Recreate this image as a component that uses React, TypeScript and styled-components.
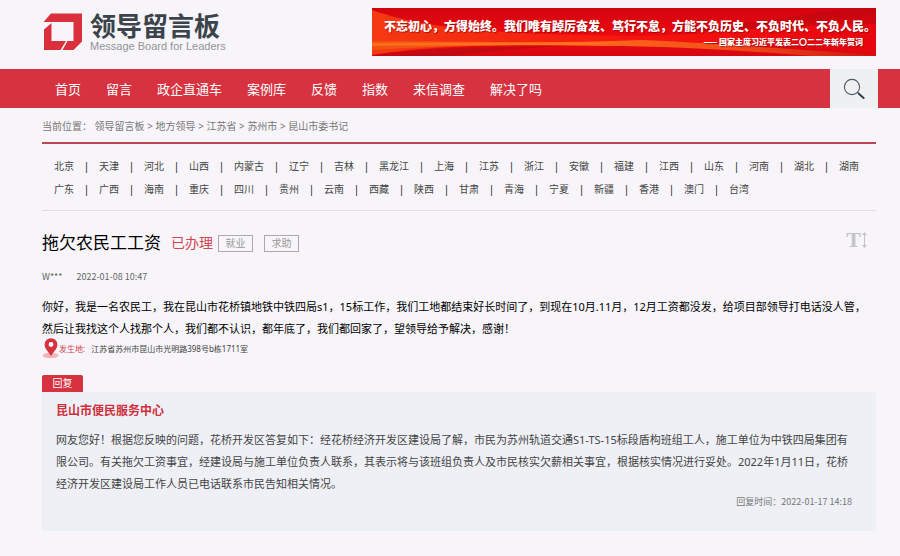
import React from "react";
import styled, { createGlobalStyle } from "styled-components";

const Global = createGlobalStyle`
  * { box-sizing: border-box; }
  body {
    margin: 0;
    background: #f7f5f9;
    color: #444;
    font-family: "Noto Sans", "Noto Sans CJK SC", sans-serif;
    font-size: 10px;
  }
  a { color: inherit; text-decoration: none; }
  h1, h2, p, ul { margin: 0; padding: 0; }
  ul { list-style: none; }
  button { border: 0; padding: 0; background: none; font: inherit; cursor: pointer; }
`;

const Header = styled.header`
  display: flex;
  justify-content: space-between;
  align-items: flex-start;
  padding: 8px 24px 13px 42px;
`;

const Logo = styled.a`
  display: flex;
  gap: 8px;
  padding-top: 5px;
`;

const LogoText = styled.span`
  display: flex;
  flex-direction: column;
`;

const LogoName = styled.strong`
  font-size: 26px;
  line-height: 26px;
  font-weight: 700;
  color: #3b444a;
  white-space: nowrap;
`;

const LogoSub = styled.span`
  font-family: "Liberation Sans", sans-serif;
  font-size: 11px;
  line-height: 14px;
  color: #929497;
  white-space: nowrap;
`;

const Banner = styled.div`
  position: relative;
  width: 504px;
  height: 48px;
  padding: 9px 5px 0 12px;
  overflow: hidden;
  color: #fff;
  font-family: "Noto Sans CJK SC", sans-serif;
  font-weight: 900;
  white-space: nowrap;
  text-shadow: 1px 1px 1px rgba(120, 0, 0, 0.6);
`;

const BannerArt = styled.svg`
  position: absolute;
  inset: 0;
  width: 100%;
  height: 100%;
`;

const Slogan = styled.p`
  position: relative;
  font-size: 12px;
  line-height: 18px;
`;

const Source = styled.p`
  position: relative;
  padding-right: 8px;
  font-size: 8px;
  line-height: 14px;
  text-align: right;
`;

const Nav = styled.nav`
  display: flex;
  align-items: stretch;
  justify-content: space-between;
  height: 39px;
  padding: 0 22px 0 55px;
  background: #d6323f;
  color: #fff;
`;

const NavList = styled.ul`
  display: flex;
  align-items: center;
  gap: 25px;
  font-size: 13px;
  line-height: 20px;
  white-space: nowrap;
`;

const SearchButton = styled.button`
  display: flex;
  align-items: center;
  justify-content: center;
  width: 48px;
  background: #eff0f1;
`;

const Main = styled.main`
  padding: 0 24px 25px 42px;
`;

const Breadcrumb = styled.nav`
  padding: 8px 0 6px;
  border-bottom: 2px solid #bd4552;
  font-size: 10px;
  line-height: 20px;
  color: #777;
`;

const Regions = styled.nav`
  padding: 11px 0 9px 12px;
  border-bottom: 1px solid #dedde1;
`;

const RegionRow = styled.ul`
  display: flex;
  line-height: 23px;
  white-space: nowrap;
`;

const Region = styled.li`
  display: flex;
`;

const Divider = styled.span`
  width: 25px;
  text-align: center;
  color: #222;
`;

const TitleRow = styled.div`
  display: flex;
  align-items: center;
  height: 24px;
  margin-top: 20px;
`;

const Title = styled.h1`
  font-size: 17px;
  line-height: 24px;
  font-weight: 400;
  color: #000;
`;

const Status = styled.span`
  margin: 0 5px 0 10px;
  font-size: 14px;
  line-height: 20px;
  color: #d04552;
`;

const Tag = styled.span`
  width: 35px;
  margin-right: 11px;
  border: 1px solid #aaa;
  font-size: 10px;
  line-height: 15px;
  text-align: center;
  color: #999;
`;

const SizeButton = styled.button`
  display: flex;
  align-items: center;
  gap: 1px;
  margin: 0 9px 6px auto;
  font-family: "Liberation Serif", serif;
  font-size: 22px;
  line-height: 20px;
  font-weight: 700;
  color: #c3c3c6;
`;

const Meta = styled.p`
  display: flex;
  gap: 14px;
  margin-top: 13px;
  font-family: "Noto Sans CJK SC", sans-serif;
  font-size: 9px;
  line-height: 18px;
  color: #666;
`;

const Message = styled.p`
  margin-top: 10px;
  font-size: 11px;
  line-height: 22px;
  color: #000;
`;

const Place = styled.p`
  display: flex;
  align-items: center;
  height: 16px;
  font-size: 8px;
  color: #444;
`;

const PlaceLabel = styled.span`
  margin-right: 6px;
  color: #d04552;
`;

const ReplyTab = styled.div`
  width: 41px;
  margin-top: 19px;
  border-radius: 2px 2px 0 0;
  background: #d6323f;
  color: #fff;
  font-size: 10px;
  line-height: 17px;
  text-align: center;
`;

const Reply = styled.section`
  padding: 8px 20px 22px 14px;
  background: #eef0f6;
`;

const ReplyTitle = styled.h2`
  font-size: 12px;
  line-height: 22px;
  font-weight: 700;
  color: #d0303d;
`;

const ReplyText = styled.p`
  margin-top: 7px;
  font-size: 11px;
  line-height: 22px;
  color: #444;
`;

const ReplyTime = styled.p`
  padding-right: 4px;
  font-family: "Noto Sans CJK SC", sans-serif;
  font-size: 9px;
  line-height: 14px;
  text-align: right;
  color: #777;
`;

const navItems = ["首页", "留言", "政企直通车", "案例库", "反馈", "指数", "来信调查", "解决了吗"];
const crumbs = ["领导留言板", "地方领导", "江苏省", "苏州市", "昆山市委书记"];
const regions = [
  ["北京", "天津", "河北", "山西", "内蒙古", "辽宁", "吉林", "黑龙江", "上海", "江苏", "浙江", "安徽", "福建", "江西", "山东", "河南", "湖北", "湖南"],
  ["广东", "广西", "海南", "重庆", "四川", "贵州", "云南", "西藏", "陕西", "甘肃", "青海", "宁夏", "新疆", "香港", "澳门", "台湾"],
];

const LogoMark = () => (
  <svg width="40" height="38" viewBox="0 0 40 38" aria-hidden="true">
    <path fill="#d9303c" d="M9 0.500H40V28.500L31.500 37H20.500L25.500 28H31.500V9H1.500z" />
    <path fill="#d9303c" d="M2 16.500L9.500 10V28H24L18.500 37H2z" />
  </svg>
);

export default function App() {
  return (
    <>
      <Global />
      <Header>
        <Logo href="#">
          <LogoMark />
          <LogoText>
            <LogoName>领导留言板</LogoName>
            <LogoSub>Message Board for Leaders</LogoSub>
          </LogoText>
        </Logo>
        <Banner>
          <BannerArt viewBox="0 0 504 48" preserveAspectRatio="none" aria-hidden="true">
            <defs>
              <linearGradient id="base" x1="0" y1="0" x2="0" y2="1">
                <stop offset="0" stopColor="#d3040f" />
                <stop offset="0.6" stopColor="#ee0a10" />
                <stop offset="1" stopColor="#d60712" />
              </linearGradient>
              <linearGradient id="glow" x1="0" y1="0" x2="1" y2="0">
                <stop offset="0" stopColor="#f43a12" />
                <stop offset="0.5" stopColor="#f5160f" />
                <stop offset="1" stopColor="#e8060f" />
              </linearGradient>
              <linearGradient id="ray" x1="0" y1="0" x2="1" y2="0">
                <stop offset="0" stopColor="#f2500f" />
                <stop offset="0.4" stopColor="#fb6a1c" />
                <stop offset="0.7" stopColor="#f4501a" />
                <stop offset="1" stopColor="#cc1512" />
              </linearGradient>
            </defs>
            <rect width="504" height="48" fill="url(#base)" />
            <path fill="url(#glow)" d="M0 2C60 24 150 26 260 28C350 28 430 16 504 6V44C400 34 300 34 200 36C110 36 40 40 0 47z" />
            <path fill="url(#ray)" d="M0 33C80 33 170 36 270 32C360 36 430 42 504 47V48H440C360 42 300 38 230 38C150 36 60 38 0 42z" />
            <path fill="#ff8126" opacity="0.6" d="M0 35C90 34 170 37 260 34C200 39 90 36 0 38z" />
            <path fill="#b8050e" opacity="0.5" d="M504 0V16C440 16 380 22 310 24C380 14 440 6 480 0z" />
            <path fill="#b30a12" opacity="0.6" d="M0 48C50 40 110 39 190 38C130 42 100 45 80 48z" />
          </BannerArt>
          <Slogan>不忘初心，方得始终。我们唯有踔厉奋发、笃行不怠，方能不负历史、不负时代、不负人民。</Slogan>
          <Source>—— 国家主席习近平发表二〇二二年新年贺词</Source>
        </Banner>
      </Header>
      <Nav>
        <NavList>
          {navItems.map((n) => (
            <li key={n}><a href="#">{n}</a></li>
          ))}
        </NavList>
        <SearchButton type="button" aria-label="搜索">
          <svg width="22" height="22" viewBox="0 0 22 22" fill="none" aria-hidden="true">
            <circle cx="9" cy="9" r="7.6" stroke="#4f5b68" strokeWidth="1.1" />
            <path d="M14.4 14.4l1.6 1.4" stroke="#33414f" strokeWidth="1" />
            <path d="M15.6 15.4l5 4.6" stroke="#33414f" strokeWidth="2" strokeLinecap="round" />
          </svg>
        </SearchButton>
      </Nav>
      <Main>
        <Breadcrumb aria-label="当前位置">
          当前位置：{" "}
          {crumbs.map((c, i) => (
            <React.Fragment key={c}>
              {i > 0 && " > "}
              <a href="#">{c}</a>
            </React.Fragment>
          ))}
        </Breadcrumb>
        <Regions aria-label="地区">
          {regions.map((row) => (
            <RegionRow key={row[0]}>
              {row.map((r, i) => (
                <Region key={r}>
                  <a href="#">{r}</a>
                  {i < row.length - 1 && <Divider>|</Divider>}
                </Region>
              ))}
            </RegionRow>
          ))}
        </Regions>
        <TitleRow>
          <Title>拖欠农民工工资</Title>
          <Status>已办理</Status>
          <Tag>就业</Tag>
          <Tag>求助</Tag>
          <SizeButton type="button" aria-label="字号">
            T
            <svg width="5" height="16" viewBox="0 0 5 16" aria-hidden="true">
              <path d="M2.500 0L5 3H0zM2.500 16L5 13H0z" fill="#c3c3c6" />
              <path d="M2.500 2v12" stroke="#c3c3c6" strokeWidth="1" />
            </svg>
          </SizeButton>
        </TitleRow>
        <Meta>
          <span>W***</span>
          <time>2022-01-08 10:47</time>
        </Meta>
        <Message>
          你好，我是一名农民工，我在昆山市花桥镇地铁中铁四局s1，15标工作，我们工地都结束好长时间了，到现在10月.11月，12月工资都没发，给项目部领导打电话没人管，然后让我找这个人找那个人，我们都不认识，都年底了，我们都回家了，望领导给予解决，感谢！
        </Message>
        <Place>
          <svg width="17" height="21" viewBox="0 0 17 21" aria-hidden="true">
            <ellipse cx="8.5" cy="17.5" rx="8" ry="2.8" fill="#f3b4ba" />
            <path d="M9 18C6 13.500 2.600 10.500 2.600 6.600a6.400 6.400 0 0 1 12.800 0C15.400 10.500 12 13.500 9 18z" fill="#d6323f" />
            <circle cx="9" cy="6.500" r="2.400" fill="#fff" />
          </svg>
          <PlaceLabel>发生地:</PlaceLabel>
          <span>江苏省苏州市昆山市光明路398号b栋1711室</span>
        </Place>
        <ReplyTab>回复</ReplyTab>
        <Reply>
          <ReplyTitle>昆山市便民服务中心</ReplyTitle>
          <ReplyText>
            网友您好！根据您反映的问题，花桥开发区答复如下：经花桥经济开发区建设局了解，市民为苏州轨道交通S1-TS-15标段盾构班组工人，施工单位为中铁四局集团有限公司。有关拖欠工资事宜，经建设局与施工单位负责人联系，其表示将与该班组负责人及市民核实欠薪相关事宜，根据核实情况进行妥处。2022年1月11日，花桥经济开发区建设局工作人员已电话联系市民告知相关情况。
          </ReplyText>
          <ReplyTime>回复时间：2022-01-17 14:18</ReplyTime>
        </Reply>
      </Main>
    </>
  );
}
